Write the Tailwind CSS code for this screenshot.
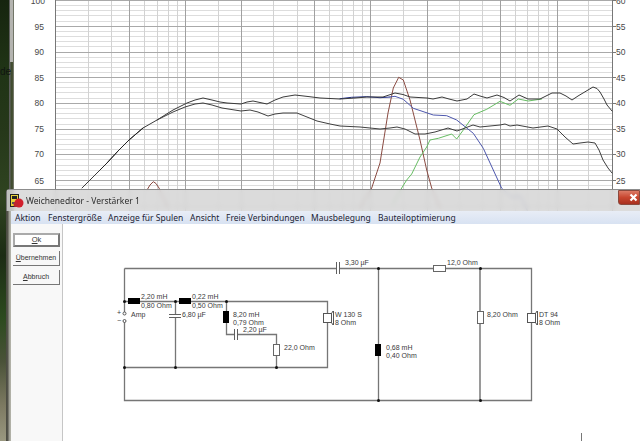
<!DOCTYPE html>
<html lang="de">
<head>
<meta charset="utf-8">
<title>Weicheneditor</title>
<script src="https://cdn.jsdelivr.net/npm/@tailwindcss/browser@4"></script>
</head>
<body class="bg-white overflow-hidden">
<div class="relative w-[640px] h-[441px] overflow-hidden flex blur-[0.35px] font-['Liberation_Sans',sans-serif]">
  <!-- desktop wallpaper -->
  <div class="w-[9px] h-full relative bg-[linear-gradient(180deg,#16240f_0%,#1f3315_15%,#26381a_30%,#2f4420_45%,#1c2c14_58%,#2c4a1e_72%,#4a5238_82%,#7d7a62_92%,#9a9880_100%)]">
    <span class="absolute left-[0px] top-[66px] text-[10px] leading-[12px] text-[#101510]">de</span>
  </div>
  <!-- chart window frame -->
  <div class="w-[5px] h-full bg-[linear-gradient(90deg,#555_0%,#666_20%,#3d4a2e_40%,#4a5236_80%,#999_100%)]">
    <div class="w-[3px] h-[62px] ml-[1px] bg-[#b4b4b0]"></div>
  </div>
  <!-- chart -->
  <div class="flex-1 bg-white relative">
    <svg width="626" height="441" viewBox="14 0 626 441" class="block">
      <g fill="none" shape-rendering="crispEdges">
        <path stroke="#dddddd" d="M55 5.5H612M55 10.5H612M55 15.5H612M55 21.5H612M55 31.5H612M55 36.5H612M55 41.5H612M55 46.5H612M55 57.5H612M55 62.5H612M55 67.5H612M55 72.5H612M55 82.5H612M55 87.5H612M55 92.5H612M55 98.5H612M55 108.5H612M55 113.5H612M55 118.5H612M55 124.5H612M55 134.5H612M55 139.5H612M55 144.5H612M55 149.5H612M55 159.5H612M55 165.5H612M55 170.5H612M55 175.5H612M55 185.5H612M55 190.5H612M55 195.5H612M55 200.5H612"/>
        <path stroke="#d2d2d2" d="M88.500 0V215M111.500 0V215M144.500 0V215M157.500 0V215M168.500 0V215M177.500 0V215M218.500 0V215M273.500 0V215M297.500 0V215M329.500 0V215M342.500 0V215M353.500 0V215M362.500 0V215M403.500 0V215M459.500 0V215M482.500 0V215M515.500 0V215M527.500 0V215M538.500 0V215M548.500 0V215M588.500 0V215"/>
        <path stroke="#a9a9a9" d="M55 0.500H612M55 26.500H612M55 52.500H612M55 77.500H612M55 103.500H612M55 129.500H612M55 154.500H612M55 180.500H612M55 206.500H612"/>
        <path stroke="#a0a0a0" d="M129.500 0V215M185.500 0V215M241.500 0V215M314.500 0V215M370.500 0V215M427.500 0V215M500.500 0V215M557.500 0V215"/>
        <path stroke="#777777" d="M55.500 0V215M612.500 0V215M612 0.500H616M612 26.500H616M612 52.500H616M612 77.500H616M612 103.500H616M612 129.500H616M612 154.500H616M612 180.500H616M612 206.500H616"/>
      </g>
      <g fill="none" stroke-linejoin="round" stroke-linecap="round">
        <!-- brown curves -->
        <path stroke="#8a4b42" d="M147 190L150 185L153.300 181.700L156 183.500L159 188L162 195L167 207"/>
        <path stroke="#8a4b42" d="M360 208L371.700 188L380 163L388 113L393.300 88L398.700 77.300L403.300 80L410 100L420 140L426.700 170L431.700 188L440 208"/>
        <!-- green -->
        <path stroke="#67bd63" d="M393 204L401.700 188L406.700 180L411.700 174L420 157L426.700 147L430 140L438.300 138.300L451.700 134L456.700 139L463.300 130L474 114.700L486.700 109.300L500 101.300L510 105.300L518.300 99L528.300 101L541.700 99"/>
        <!-- blue -->
        <path stroke="#1f2d8a" d="M340 98.700L351.700 97.300L366.700 96.700L380 97.700L390 97"/>
        <path stroke="#4d57ad" d="M390 97L395 96.300L403.300 99.300L413.300 108.300L433.300 115L446.700 115.700L456.700 120L473.300 133.300L483.300 148.300L501.700 188.300L511.700 197.300L520 195.700L527 210"/>
        <!-- system curves -->
        <path stroke="#3a3a3a" d="M82 188L95 175L107 163L118 151L129 140L143 128L157 120L173 110L187 103L195 100L203 98L212 100L220 102L227 103L241 104L247 102L253 101L260 102.500L267 104L275 100L283 97L295 95L308 96.500L320 98L340 99L355 98L367 97L383 97L389 95L395 93L403 94.500L410 97L427 98L433 99L442 97L449 99L457 101L467 99L474 94L480 96L487 98L497 95L504 97.500L510 101L519 95L528 99L540 99L546 96L552 93L560 93L566 96L572 100L578 96L583 93L593 87L597 88.500L600 92L604 99L607 105L612 111"/>
        <path stroke="#3f3f3f" d="M157 120L173 112L185 107L195 104L203 103L212 105L222 108L241 111L250 110L258 112L268 116L275 114L283 113L297 113L307 117L317 121L330 124L340 126L360 127L380 129L390 128L397 127L405 129L415 134L425 134L435 132L448 128L457 131L465 128L473 125L480 127L500 125L505 124L510 126L517 125L533 128L548 126L557 129L565 137L573 144L580 143L588 142L595 143L599 150L603 160L608 168L612 173"/>
        <path stroke="#222222" d="M100 170L107 163L118 151L129 140L143 128"/>
      </g>
      <g fill="#484848" text-anchor="end" font-size="8.500">
        <text x="45" y="4">100</text><text x="44" y="30">95</text><text x="44" y="55">90</text><text x="44" y="81">85</text><text x="44" y="106">80</text><text x="44" y="132">75</text><text x="44" y="157">70</text><text x="44" y="184">65</text>
      </g>
      <g fill="#484848" font-size="8.500">
        <text x="616" y="4">60</text><text x="616" y="30">55</text><text x="616" y="55">50</text><text x="616" y="81">45</text><text x="616" y="106">40</text><text x="616" y="132">35</text><text x="616" y="157">30</text><text x="616" y="184">25</text>
      </g>
    </svg>
  </div>

  <!-- crossover editor dialog -->
  <div class="absolute left-[6px] top-[189px] w-[634px] h-[252px] flex flex-col rounded-tl-[3px] overflow-hidden">
    <div class="h-[22px] shrink-0 flex items-start justify-between bg-[#d6d6d6]/85 backdrop-blur-[2px] border-t border-[#8c8c8c] border-l border-l-[#777]">
      <div class="flex items-center gap-[2px] pl-[3px] pt-[3px]">
        <svg width="14" height="14" viewBox="0 0 14 14" class="shrink-0">
          <rect x="0.500" y="0.500" width="8" height="12" fill="#e8d23a" stroke="#222"/>
          <rect x="2" y="2" width="5" height="3" fill="#222"/>
          <rect x="2" y="8" width="5" height="2" fill="#555"/>
          <circle cx="9" cy="9" r="4.500" fill="#d11f2c"/>
          <circle cx="6" cy="10.500" r="2.500" fill="#c0262f"/>
        </svg>
        <span class="text-[8.5px] leading-[15px] text-[#2c2c2c] font-['Noto_Sans',sans-serif] whitespace-nowrap">Weicheneditor - Verstärker 1</span>
      </div>
      <div class="w-[22px] h-[15px] bg-[linear-gradient(180deg,#dc7a66_0%,#c8462f_50%,#a8301f_100%)] rounded-bl-[3px] border border-[#8a4a3e] flex items-center justify-end pr-[1px]">
        <svg width="9" height="9" viewBox="0 0 9 9"><path d="M1.500 1.500L7.500 7.500M7.500 1.500L1.500 7.500" stroke="#ffffff" stroke-width="2.200"/></svg>
      </div>
    </div>
    <div class="flex-1 min-h-0 flex">
      <div class="w-[5px] shrink-0 bg-[linear-gradient(90deg,#4a4a42_0%,#55554b_40%,#9a9a90_60%,#b8b8ae_100%)]"></div>
      <div class="flex-1 min-w-0 flex flex-col bg-white">
        <div class="h-[13px] shrink-0 flex items-center bg-[linear-gradient(180deg,#e8edf6_0%,#d8e2f2_100%)] text-[8.5px] leading-[13px] text-[#1c2434] font-['Noto_Sans',sans-serif] whitespace-nowrap relative">
          <span class="absolute left-[4px]">Aktion</span>
          <span class="absolute left-[37px]">Fenstergröße</span>
          <span class="absolute left-[97px]">Anzeige für Spulen</span>
          <span class="absolute left-[179px]">Ansicht</span>
          <span class="absolute left-[215px]">Freie Verbindungen</span>
          <span class="absolute left-[300px]">Mausbelegung</span>
          <span class="absolute left-[367px]">Bauteiloptimierung</span>
        </div>
        <div class="flex-1 min-h-0 flex">
          <div class="w-[52px] shrink-0 bg-[#f8f8f8] border-r border-[#c6c6c6] flex flex-col gap-[4px] pt-[9px] px-[2px]">
            <div class="h-[14px] w-[47px] border-2 border-[#777] border-t-[#aaa] border-l-[#aaa] bg-white flex items-center justify-center text-[7.5px] text-[#333]"><span><span class="underline">O</span>k</span></div>
            <div class="h-[15px] w-[47px] border-b border-r border-[#777] bg-[#f8f8f8] flex items-center justify-center text-[7px] text-[#333]"><span><span class="underline">Ü</span>bernehmen</span></div>
            <div class="h-[15px] w-[47px] border-b border-r border-[#777] bg-[#f8f8f8] flex items-center justify-center text-[7px] text-[#333]"><span><span class="underline">A</span>bbruch</span></div>
          </div>
          <svg width="577" height="217" viewBox="63 224 577 217" class="block flex-1">
            <g fill="none" stroke="#767676" stroke-width="1.300">
              <path d="M124.500 268.500H336M339.500 268.500H433M446 268.500H531.500V400.500H124.500V367.500M124.500 321V367.500H327.500V301.500H124.500V312M124.500 268.500V301.500"/>
              <path d="M175.500 301.500V314M175.500 317V367.500M226.500 301.500V334.500H234M237 334.500H276.500V344M276.500 356V367.500"/>
              <path d="M378.500 268.500V400.500"/>
              <path stroke="#9a9a9a" stroke-width="2" d="M480 268.500V400.500"/>
            </g>
            <g fill="#606060" shape-rendering="crispEdges">
              <rect x="169" y="314" width="12" height="1"/><rect x="169" y="317" width="12" height="1"/>
              <rect x="234" y="329" width="1" height="11"/><rect x="237" y="329" width="1" height="11"/>
              <rect x="336" y="262" width="1" height="12"/><rect x="339" y="262" width="1" height="12"/>
            </g>
            <g fill="#000000">
              <rect x="128" y="298" width="12" height="6"/><rect x="179" y="298" width="12" height="6"/>
              <rect x="223" y="311" width="6" height="12"/><rect x="375" y="344" width="6" height="12"/>
            </g>
            <g fill="#ffffff" stroke="#666666" shape-rendering="crispEdges">
              <rect x="273.500" y="344.500" width="6" height="11"/>
              <rect x="433.500" y="265.500" width="12" height="6"/>
              <rect x="477.500" y="311.500" width="6" height="12"/>
            </g>
            <g fill="#111111">
              <circle cx="124.500" cy="301.500" r="1.500"/><circle cx="175.500" cy="301.500" r="1.500"/><circle cx="226.500" cy="301.500" r="1.500"/>
              <circle cx="124.500" cy="367.500" r="1.500"/><circle cx="175.500" cy="367.500" r="1.500"/><circle cx="276.500" cy="367.500" r="1.500"/>
              <circle cx="378.500" cy="268.500" r="1.500"/><circle cx="480.500" cy="268.500" r="1.500"/><circle cx="378.500" cy="400.500" r="1.500"/><circle cx="480.500" cy="400.500" r="1.500"/>
            </g>
            <g fill="#ffffff" stroke="#555555">
              <circle cx="124.500" cy="313.500" r="1.500"/><circle cx="124.500" cy="321" r="1.500"/>
              <rect x="323.500" y="313.500" width="8" height="9"/>
              <rect x="527.500" y="313.500" width="8" height="9"/>
            </g>
            <g fill="none" stroke="#555555">
              <path d="M333 311L331.500 313.500V322.500L333 325M333.500 311V325"/>
              <path d="M537 311L535.500 313.500V322.500L537 325M537.500 311V325"/>
            </g>
            <g fill="#3a3a3a" font-size="7">
              <text x="117" y="315">+</text><text x="117" y="323">−</text>
              <text x="131" y="317">Amp</text>
              <text x="141" y="299">2,20 mH</text><text x="141" y="308">0,80 Ohm</text>
              <text x="192" y="299">0,22 mH</text><text x="192" y="308">0,50 Ohm</text>
              <text x="182" y="317">6,80 µF</text>
              <text x="233" y="317">8,20 mH</text><text x="233" y="325">0,79 Ohm</text>
              <text x="243" y="332">2,20 µF</text>
              <text x="284" y="350">22,0 Ohm</text>
              <text x="335" y="317">W 130 S</text><text x="335" y="325">8 Ohm</text>
              <text x="345" y="265">3,30 µF</text>
              <text x="447" y="265">12,0 Ohm</text>
              <text x="386" y="350">0,68 mH</text><text x="386" y="358">0,40 Ohm</text>
              <text x="487" y="317">8,20 Ohm</text>
              <text x="539" y="317">DT 94</text><text x="539" y="325">8 Ohm</text>
            </g>
            <rect x="581" y="433" width="1" height="8" fill="#777777"/>
          </svg>
        </div>
      </div>
    </div>
  </div>
</div>
</body>
</html>
